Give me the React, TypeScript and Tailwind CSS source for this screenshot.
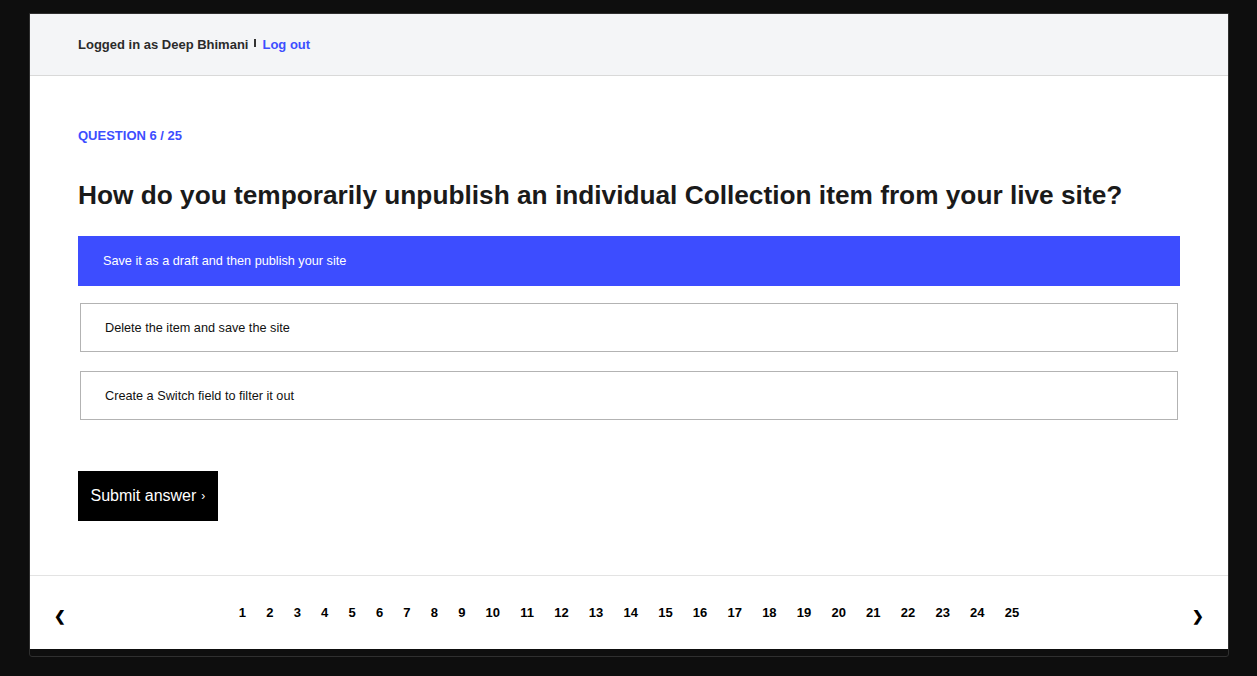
const options = [
  'Save it as a draft and then publish your site',
  'Delete the item and save the site',
  'Create a Switch field to filter it out',
]

const pages = Array.from({ length: 25 }, (_, i) => i + 1)

export default function App() {
  return (
    <div className="min-h-[676px] bg-[#0e0e0e] pl-[29px] pr-[28px] pt-[13px] font-['Liberation_Sans',Arial,sans-serif]">
      <div className="rounded-b-[3px] border border-[#2f2f2f] bg-[#0e0e0e] pb-[7px]">
        {/* header */}
        <header className="flex h-[62px] items-center border-b border-[#d9d9d9] bg-[#f4f5f7] pl-[48px] text-[13px] font-bold">
          <span className="text-[#2b2b2b]">Logged in as Deep Bhimani</span>
          <span className="mx-[6px] mb-[4px] h-[8px] w-[2px] bg-[#333]" />
          <a className="text-[#3d4eff]">Log out</a>
        </header>

        {/* question */}
        <main className="bg-white px-[48px] pb-[54px] pt-[51px]">
          <p className="text-[13px] font-bold uppercase leading-[18px] text-[#3d4eff]">Question 6 / 25</p>
          <h1 className="mt-[33px] text-[26.25px] font-bold leading-[34px] text-[#1a1a1a]">
            How do you temporarily unpublish an individual Collection item from your live site?
          </h1>
          <div className="mt-[24px] flex flex-col">
            <div className="flex h-[50px] items-center bg-[#3d4dff] px-[25px] pt-[2px] text-[12.7px] text-white">
              {options[0]}
            </div>
            {options.slice(1).map((o, i) => (
              <div
                key={o}
                className={
                  (i === 0 ? 'mt-[17px] ' : 'mt-[19px] ') +
                  'mx-[2px] flex h-[49px] items-center border border-[#b3b3b3] bg-white px-[24px] pt-[2px] text-[12.7px] text-[#111]'
                }
              >
                {o}
              </div>
            ))}
          </div>
          <button className="mt-[51px] flex h-[50px] items-center bg-black px-[12.5px] text-[16px] text-white">
            Submit answer <span className="ml-[5px] text-[12px]">›</span>
          </button>
        </main>

        {/* pagination */}
        <footer className="flex h-[74px] items-center justify-between border-t border-[#e3e3e3] bg-white px-[24px]">
          <span className="mt-[8px] text-[14px] font-bold text-black">❮</span>
          <nav className="flex text-[13px] font-bold text-black">
            {pages.map((p) => (
              <span key={p} className="px-[10.1px]">
                {p}
              </span>
            ))}
          </nav>
          <span className="mt-[8px] text-[14px] font-bold text-black">❯</span>
        </footer>
      </div>
    </div>
  )
}
